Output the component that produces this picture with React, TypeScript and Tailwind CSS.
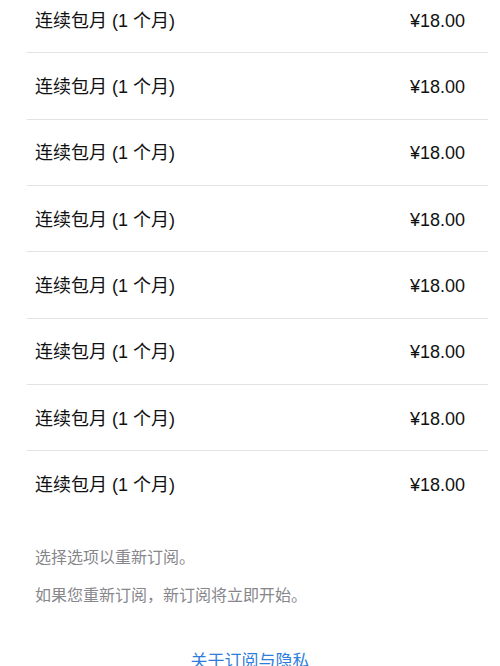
import React from "react";

export default function App() {
  const rows = Array.from({ length: 8 });
  return (
    <div
      className="w-[500px] h-[666px] overflow-hidden bg-white"
      style={{ fontFamily: '"Liberation Sans", "Noto Sans CJK SC", sans-serif' }}
    >
      <div className="-mt-[13px] pl-[27px] pr-[12px]">
        {rows.map((_, i) => (
          <div
            key={i}
            className={
              "h-[66.33px] flex items-center justify-between pl-[8px] pr-[23px] pt-[3px] " +
              (i < rows.length - 1 ? "border-b border-[#e3e3e6]" : "")
            }
          >
            <span className="text-[18px] text-[#111]">连续包月 (1 个月)</span>
            <span className="text-[18px] text-[#111]">¥18.00</span>
          </div>
        ))}
      </div>
      <div className="pl-[35px] pt-[28px] text-[16px] text-[#86868b]">
        <p className="leading-[23px]">选择选项以重新订阅。</p>
        <p className="mt-[15px] leading-[23px]">如果您重新订阅，新订阅将立即开始。</p>
      </div>
      <div className="mt-[42px] text-center text-[17px] text-[#2f7ddb]">关于订阅与隐私</div>
    </div>
  );
}
